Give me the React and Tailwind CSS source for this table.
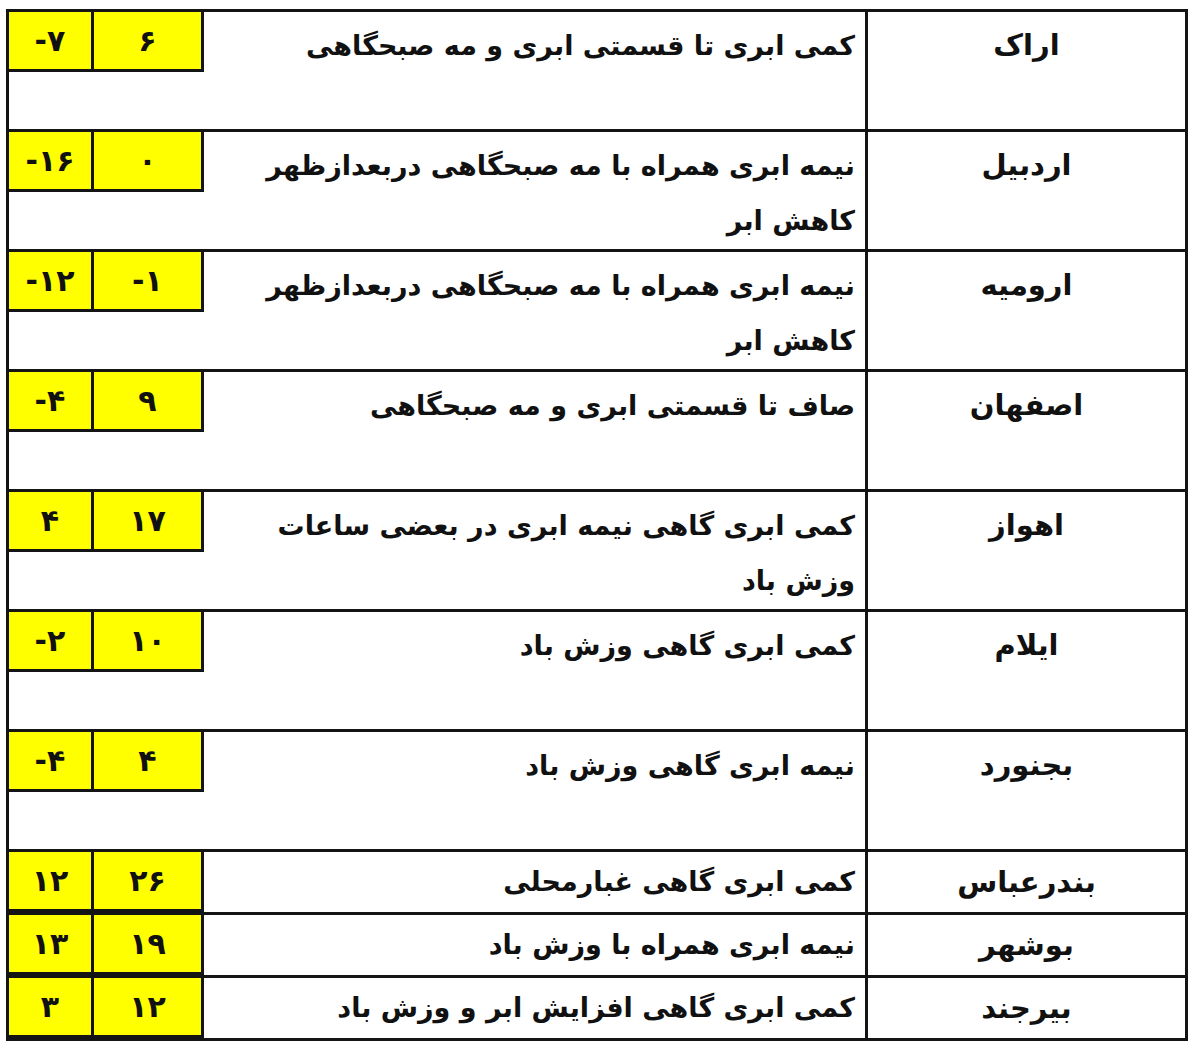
const rows = [
  { city: "اراک", desc: ["کمی ابری تا قسمتی ابری و مه صبحگاهی"], min: "-۷", max: "۶" },
  { city: "اردبیل", desc: ["نیمه ابری همراه با مه صبحگاهی دربعدازظهر", "کاهش ابر"], min: "-۱۶", max: "۰" },
  { city: "ارومیه", desc: ["نیمه ابری همراه با مه صبحگاهی دربعدازظهر", "کاهش ابر"], min: "-۱۲", max: "-۱" },
  { city: "اصفهان", desc: ["صاف تا قسمتی ابری و مه صبحگاهی"], min: "-۴", max: "۹" },
  { city: "اهواز", desc: ["کمی ابری گاهی نیمه ابری در بعضی ساعات", "وزش باد"], min: "۴", max: "۱۷" },
  { city: "ایلام", desc: ["کمی ابری گاهی وزش باد"], min: "-۲", max: "۱۰" },
  { city: "بجنورد", desc: ["نیمه ابری گاهی وزش باد"], min: "-۴", max: "۴" },
  { city: "بندرعباس", desc: ["کمی ابری گاهی غبارمحلی"], min: "۱۲", max: "۲۶", short: true },
  { city: "بوشهر", desc: ["نیمه ابری همراه با وزش باد"], min: "۱۳", max: "۱۹", short: true },
  { city: "بیرجند", desc: ["کمی ابری گاهی افزایش ابر و وزش باد"], min: "۳", max: "۱۲", short: true },
];

const font = { fontFamily: '"DejaVu Sans", "Noto Sans", sans-serif' };

const Row = ({ row }) => {
  return (
    <div
      className={`flex border-t-[3px] border-[#141414] ${row.short ? "h-[63px]" : "h-[120px]"}`}
    >
      {/* yellow temps */}
      <div className="w-[195px] shrink-0">
        <div
          dir="ltr"
          className="flex h-[60px] border-b-[3px] border-r-[3px] border-[#141414] bg-[#ffff00] text-[30px] font-bold leading-none"
        >
          <div className="flex w-[85px] items-center justify-center border-r-[3px] border-[#141414]">
            {row.min}
          </div>
          <div className="flex flex-1 items-center justify-center">{row.max}</div>
        </div>
      </div>

      {/* description */}
      <div
        dir="rtl"
        className={`w-[661px] shrink-0 pr-[10px] text-right text-[27px] font-bold ${row.short ? "pt-[2px] leading-[56px]" : "pt-[6px] leading-[55px]"}`}
      >
        {row.desc.map((line) => (
          <div key={line}>{line}</div>
        ))}
      </div>

      {/* city */}
      <div
        dir="rtl"
        className={`flex-1 border-l-[3px] border-[#141414] text-center text-[29px] font-bold ${row.short ? "pt-[2px] leading-[56px]" : "pt-[6px] leading-[55px]"}`}
      >
        {row.city}
      </div>
    </div>
  );
};

export default function App() {
  return (
    <div className="min-h-[1062px] w-[1200px] bg-white pt-[9px] text-[#111]" style={font}>
      <div className="ml-[6px] w-[1182px] border-x-[3px] border-b-[3px] border-[#141414]">
        {rows.map((row) => (
          <Row key={row.city} row={row} />
        ))}
      </div>
    </div>
  );
}
